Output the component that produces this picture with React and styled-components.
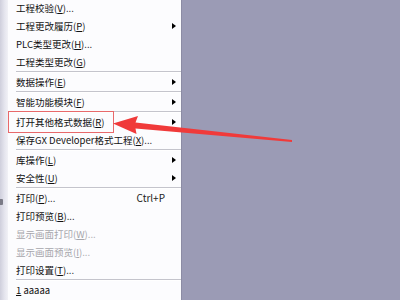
import React from 'react';
import styled, {createGlobalStyle} from 'styled-components';

const GlobalStyle = createGlobalStyle`
  html, body {
    margin: 0;
    padding: 0;
    background: #9b9bb5;
    overflow: hidden;
  }
  body {
    font-family: "Noto Sans CJK SC", "Noto Sans", sans-serif;
  }
`;

const Page = styled.div`
  position: relative;
  width: 400px;
  height: 300px;
  overflow: hidden;
  display: flex;
`;

const Menu = styled.div`
  width: 181px;
  height: 300px;
  display: flex;
  background: #fcfcfe;
  border-right: 1px solid #8c8ca4;
  overflow: hidden;
`;

const Gutter = styled.div`
  width: 8px;
  flex: none;
  background: linear-gradient(to right, #cfcfdc, #e6e6ef 60%, #f1f1f6);
  position: relative;
`;

const PrinterBit = styled.div`
  position: absolute;
  left: 0;
  top: 199px;
  width: 3px;
  height: 6px;
  background: #7a7a86;
  border-radius: 0 1px 1px 0;
`;

const Items = styled.div`
  flex: 1;
  padding-left: 8px;
  margin-top: -1px;
  display: flex;
  flex-direction: column;
`;

const Row = styled.div`
  height: 18px;
  display: grid;
  grid-template-columns: 1fr auto 16px;
  align-items: center;
  font-size: 9.5px;
  line-height: 18px;
  white-space: nowrap;
  color: ${props => props.disabled ? '#a6a6ac' : '#111'};
`;

const Key = styled.span`
  text-decoration: underline;
  text-underline-offset: 1px;
`;

const Shortcut = styled.span`
  color: #222;
  font-size: 10px;
`;

const SubArrow = styled.span`
  justify-self: start;
  margin-left: 7px;
  width: 0;
  height: 0;
  border-top: 3.5px solid transparent;
  border-bottom: 3.5px solid transparent;
  border-left: 4px solid #000;
`;

const Separator = styled.div`
  height: 2px;
  flex: none;
  border-top: 1px solid #c4c4cc;
  background: #fff;
  box-sizing: border-box;
`;

const RedBox = styled.div`
  position: absolute;
  left: 8px;
  top: 111px;
  width: 106px;
  height: 22px;
  border: 1px solid #e8696b;
  box-sizing: border-box;
`;

const Overlay = styled.svg`
  position: absolute;
  left: 0;
  top: 0;
  pointer-events: none;
`;

const menu = [
    {label: '工程校验(&V)...'},
    {label: '工程更改履历(&P)', sub: true},
    {label: 'PLC类型更改(&H)...'},
    {label: '工程类型更改(&G)'},
    {sep: true},
    {label: '数据操作(&E)', sub: true},
    {sep: true},
    {label: '智能功能模块(&F)', sub: true},
    {sep: true},
    {label: '打开其他格式数据(&R)', sub: true},
    {label: '保存GX Developer格式工程(&X)...'},
    {sep: true},
    {label: '库操作(&L)', sub: true},
    {label: '安全性(&U)', sub: true},
    {sep: true},
    {label: '打印(&P)...', shortcut: 'Ctrl+P'},
    {label: '打印预览(&B)...'},
    {label: '显示画面打印(&W)...', disabled: true},
    {label: '显示画面预览(&I)...', disabled: true},
    {label: '打印设置(&T)...'},
    {sep: true},
    {label: '&1 aaaaa'},
];

const Label = ({text}) => {
    const i = text.indexOf('&');
    if (i < 0) return <span>{text}</span>;
    return (
        <span>
            {text.slice(0, i)}<Key>{text[i + 1]}</Key>{text.slice(i + 2)}
        </span>
    );
};

const App = () => (
    <Page>
        <GlobalStyle/>
        <Menu>
            <Gutter><PrinterBit/></Gutter>
            <Items>
                {menu.map((item, i) => item.sep
                    ? <Separator key={i}/>
                    : (
                        <Row key={i} disabled={item.disabled}>
                            <Label text={item.label}/>
                            <Shortcut>{item.shortcut || ''}</Shortcut>
                            {item.sub ? <SubArrow/> : <span/>}
                        </Row>
                    ))}
            </Items>
        </Menu>
        <RedBox/>
        <Overlay width="400" height="300" viewBox="0 0 400 300">
            <polygon
                points="113,123.5 138,116 135.5,122.5 292,140 292,142 135.5,128.5 136.5,134"
                fill="#f03a3a"/>
        </Overlay>
    </Page>
);

export default App;
